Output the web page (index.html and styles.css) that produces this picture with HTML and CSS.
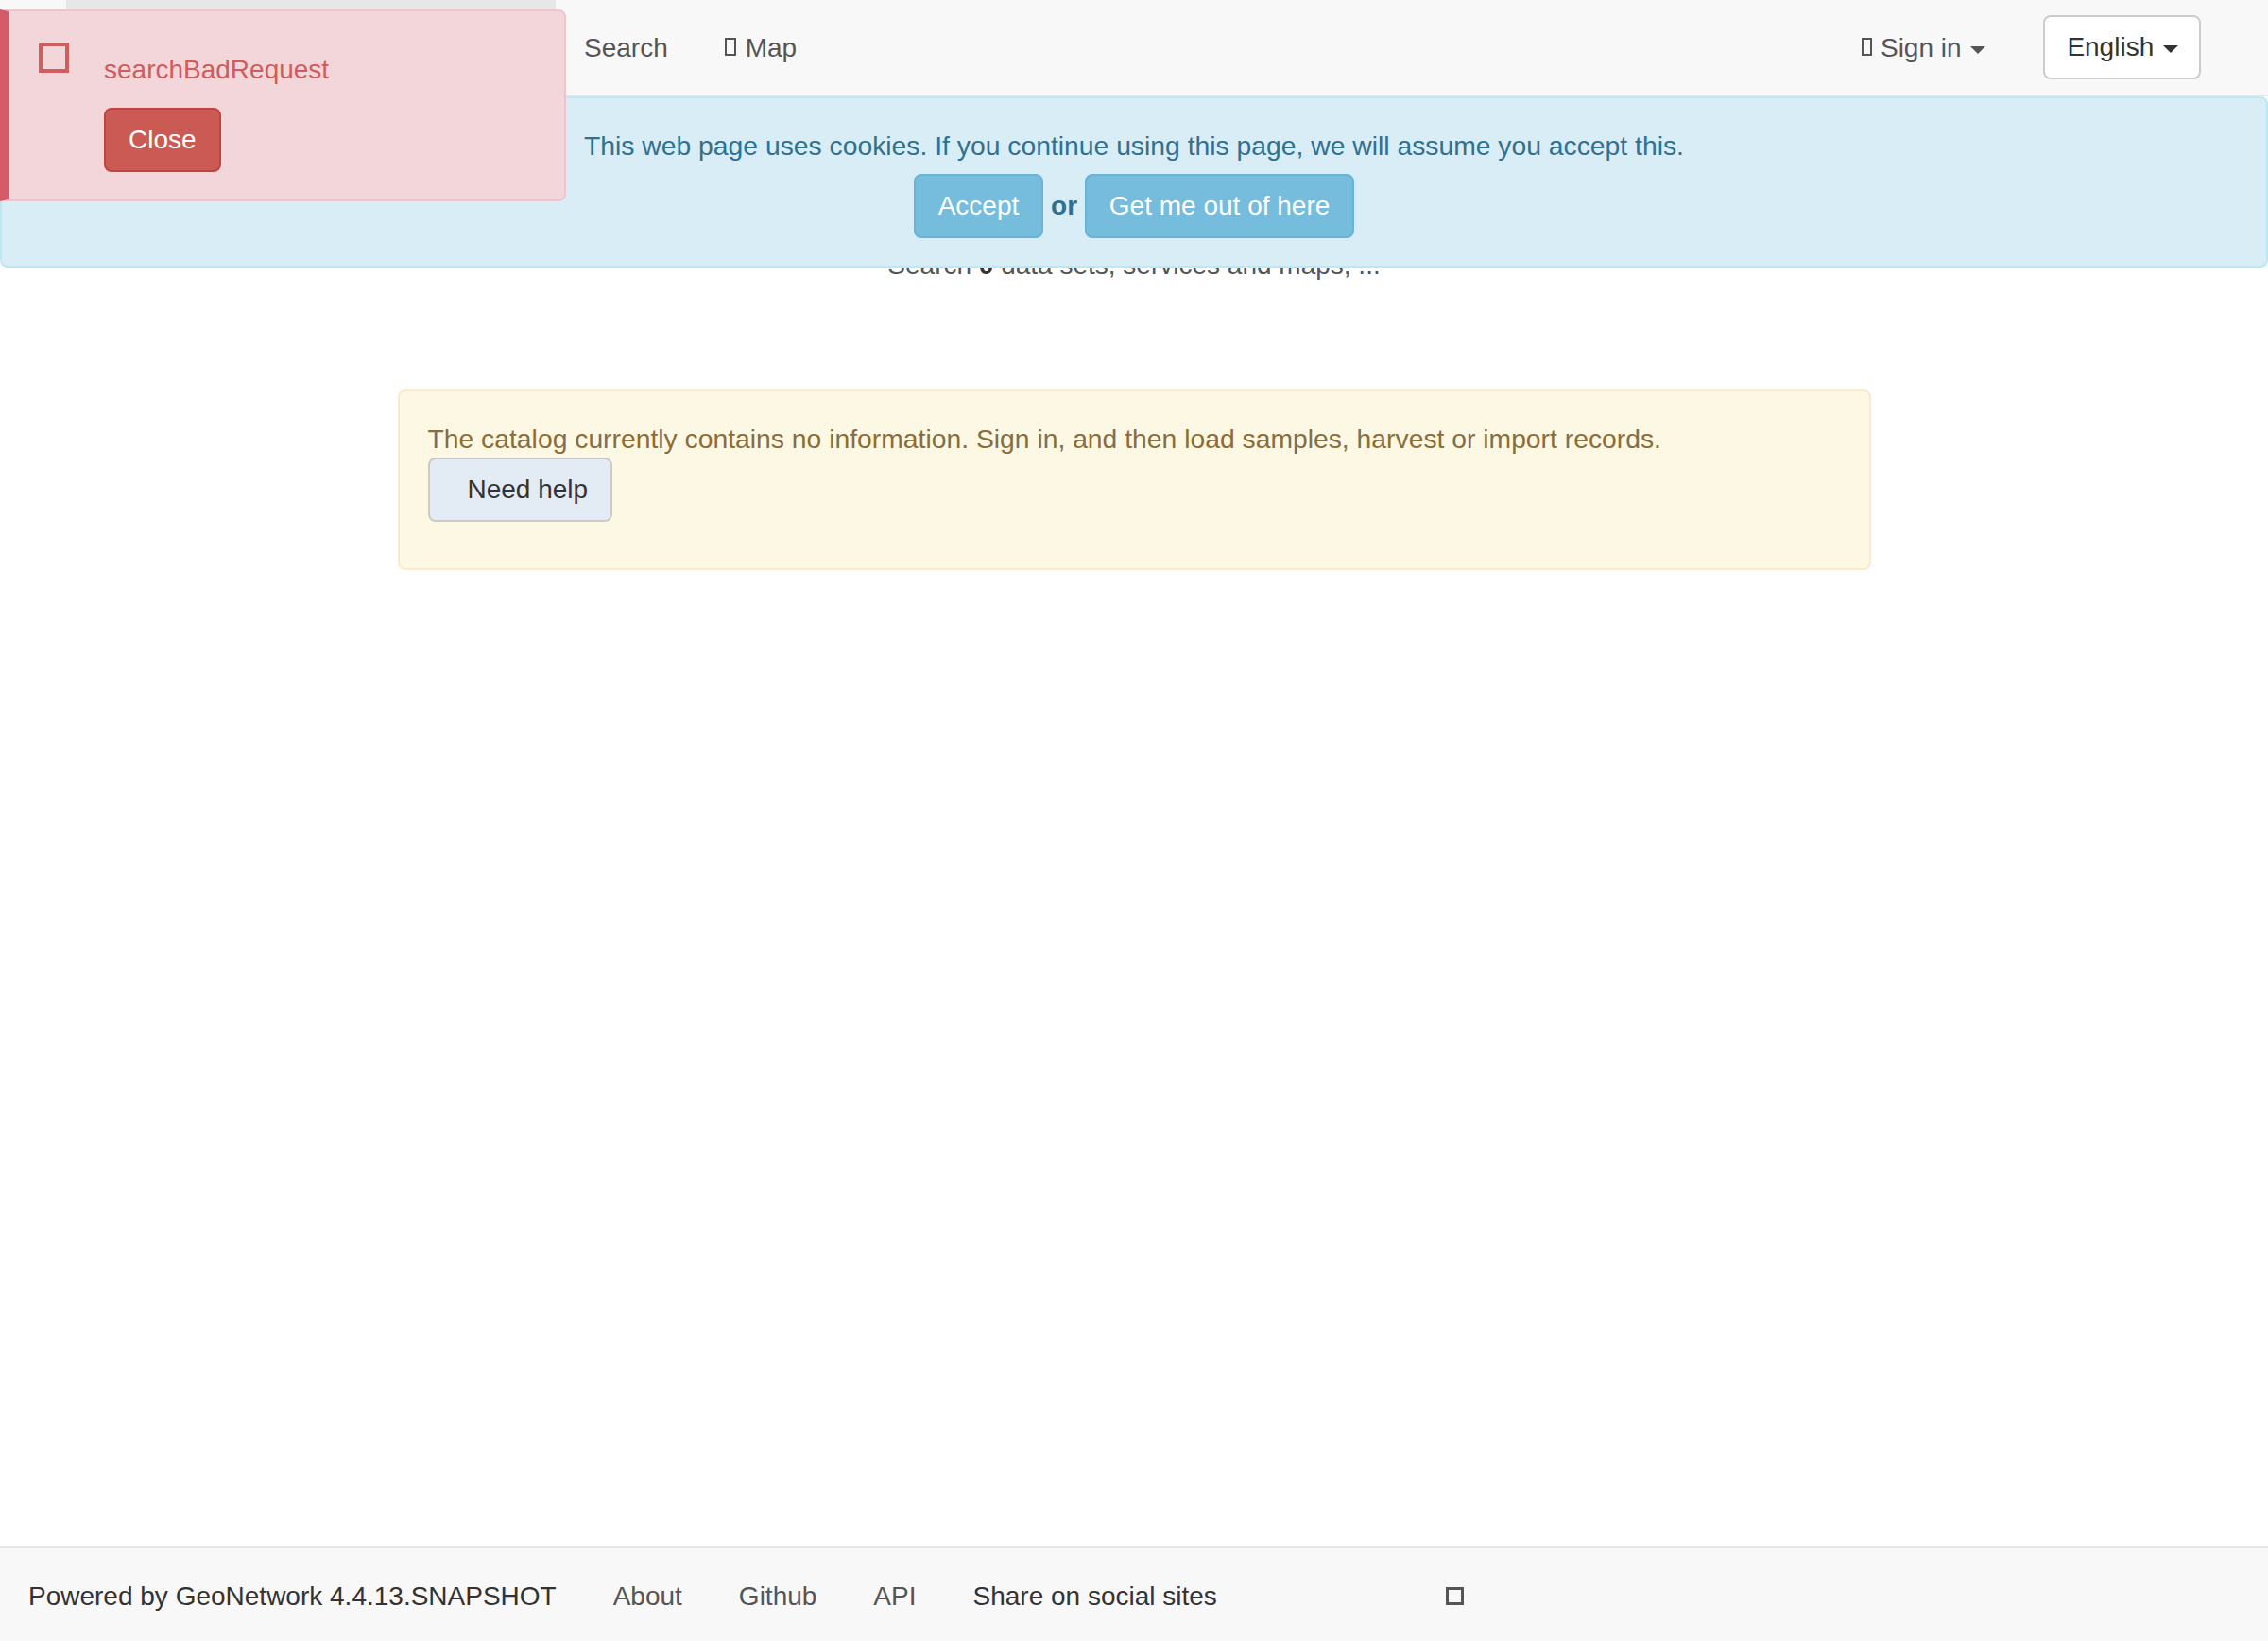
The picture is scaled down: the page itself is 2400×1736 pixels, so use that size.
FILE: index.html
```html
<!DOCTYPE html>
<html lang="en">
<head>
<meta charset="utf-8">
<title>GeoNetwork</title>
<link rel="stylesheet" href="styles.css">
</head>
<body>
<div class="page">
  <header class="navbar">
    <nav class="nav-left">
      <a class="nav-home" href="#" aria-label="Home"></a>
      <a class="nav-link" href="#">Search</a>
      <a class="nav-link" href="#"><span class="tofu tofu-nav"></span>Map</a>
    </nav>
    <nav class="nav-right">
      <a class="nav-link" href="#"><span class="tofu tofu-nav tofu-sign"></span>Sign in <span class="caret caret-light"></span></a>
      <button class="lang-btn" type="button">English <span class="caret"></span></button>
    </nav>
  </header>

  <main class="main">
    <p class="hero-count">Search <b>0</b> data sets, services and maps, ...</p>
    <div class="alert-warning">
      <p class="alert-text">The catalog currently contains no information. Sign in, and then load samples, harvest or import records.</p>
      <button class="help-btn" type="button">Need help</button>
    </div>
  </main>

  <footer class="footer">
    <span class="foot-item foot-strong">Powered by GeoNetwork 4.4.13.SNAPSHOT</span>
    <a class="foot-item foot-link" href="#">About</a>
    <a class="foot-item foot-link" href="#">Github</a>
    <a class="foot-item foot-link" href="#">API</a>
    <span class="foot-item foot-strong">Share on social sites</span>
    <span class="tofu tofu-foot"></span>
  </footer>

  <div class="cookie-banner">
    <div class="cookie-text">This web page uses cookies. If you continue using this page, we will assume you accept this.</div>
    <div class="cookie-actions"><button class="info-btn" type="button">Accept</button> <b class="cookie-or">or</b> <button class="info-btn" type="button">Get me out of here</button></div>
  </div>

  <div class="toast">
    <span class="tofu tofu-toast"></span>
    <div class="toast-body">
      <div class="toast-title">searchBadRequest</div>
      <button class="close-btn" type="button">Close</button>
    </div>
  </div>
</div>
</body>
</html>
```

FILE: styles.css
```css
* { box-sizing: border-box; }

html, body {
  margin: 0;
  padding: 0;
}

body {
  font-family: "Liberation Sans", Arial, Helvetica, sans-serif;
  font-size: 28px;
  line-height: 40px;
  color: #333;
  background: #fff;
}

button {
  font-family: inherit;
  font-size: 28px;
  line-height: 40px;
  cursor: pointer;
}

a { text-decoration: none; }

.page {
  position: relative;
  min-height: 100vh;
  display: flex;
  flex-direction: column;
}

/* ---------- navbar ---------- */
.navbar {
  height: 102px;
  background: #f8f8f8;
  border-bottom: 2px solid #e7e7e7;
  display: flex;
  justify-content: space-between;
  padding: 0 71px 0 70px;
}

.nav-left, .nav-right {
  display: flex;
  align-items: flex-start;
}

.nav-home {
  display: block;
  width: 518px;
  height: 100px;
  background: #e7e7e7;
}

.nav-link {
  display: block;
  padding: 31px 30px 29px;
  color: #555;
  white-space: nowrap;
}

.tofu {
  display: inline-block;
  border: 2px solid currentColor;
}

.tofu-nav {
  width: 12px;
  height: 19px;
  margin: 0 10px 1px 0;
  vertical-align: baseline;
}

.tofu-sign {
  width: 11px;
  margin-right: 9px;
}

.caret {
  display: inline-block;
  width: 0;
  height: 0;
  margin-left: 2px;
  vertical-align: middle;
  border-top: 8px solid #333;
  border-left: 8px solid transparent;
  border-right: 8px solid transparent;
}

.caret-light { border-top-color: #555; }

.lang-btn {
  margin: 16px 0 0 31px;
  padding: 12px 22px 12px 23px;
  background: #fff;
  color: #333;
  border: 2px solid #ccc;
  border-radius: 8px;
  white-space: nowrap;
}

/* ---------- main ---------- */
.main {
  flex: 1;
  padding-top: 159px;
}

.hero-count {
  margin: 0;
  text-align: center;
  color: #555;
}

.hero-count b { color: #333; }

.alert-warning {
  width: 1559px;
  margin: 111px auto 0;
  padding: 30px;
  background: #fcf8e3;
  border: 2px solid #faebcc;
  border-radius: 8px;
  color: #8a6d3b;
}

.alert-text {
  margin: 0;
  font-size: 28.3px;
}

.help-btn {
  display: block;
  margin-bottom: 19px;
  padding: 12px 24px 12px 40px;
  background: #e3ebf5;
  color: #333;
  border: 2px solid #cacaca;
  border-radius: 8px;
}

/* ---------- footer ---------- */
.footer {
  height: 100px;
  background: #f8f8f8;
  border-top: 2px solid #e7e7e7;
  display: flex;
  align-items: flex-start;
  padding: 31px 0 0 30px;
  gap: 60px;
  white-space: nowrap;
}

.foot-strong { color: #333; }
.foot-link { color: #555; }

.tofu-foot {
  width: 19px;
  height: 19px;
  border: 3px solid #555;
  margin: 10px 0 0 182px;
}

/* ---------- cookie banner (overlay) ---------- */
.cookie-banner {
  position: absolute;
  top: 102px;
  left: 0;
  right: 0;
  padding: 30px 30px 29px;
  background: #d9edf7;
  border: 2px solid #bce8f1;
  border-radius: 8px;
  color: #31708f;
  text-align: center;
}

.cookie-text { font-size: 28.3px; }

.cookie-actions { margin-top: 10px; }

.cookie-or { color: #31708f; }

.info-btn {
  padding: 12px 24px;
  background: #76bcdc;
  color: #fff;
  border: 2px solid #68b3d7;
  border-radius: 8px;
}

/* ---------- toast (overlay) ---------- */
.toast {
  position: absolute;
  top: 10px;
  left: 0;
  width: 599px;
  display: flex;
  align-items: flex-start;
  padding: 33px 30px 29px 32px;
  background: #f2d6da;
  border: 2px solid #eec5cc;
  border-left: 9px solid #d45b67;
  border-radius: 0 8px 8px 0;
}

.tofu-toast {
  flex-shrink: 0;
  width: 32px;
  height: 32px;
  border: 4px solid #cf5f5e;
  margin-right: 37px;
}

.toast-body { margin-top: 9px; }

.toast-title {
  font-size: 28px;
  line-height: 40px;
  color: #d05c5c;
}

.close-btn {
  display: block;
  margin-top: 20px;
  padding: 12px 24px;
  background: #cb5a54;
  color: #fff;
  border: 2px solid #c2433e;
  border-radius: 8px;
}
```
